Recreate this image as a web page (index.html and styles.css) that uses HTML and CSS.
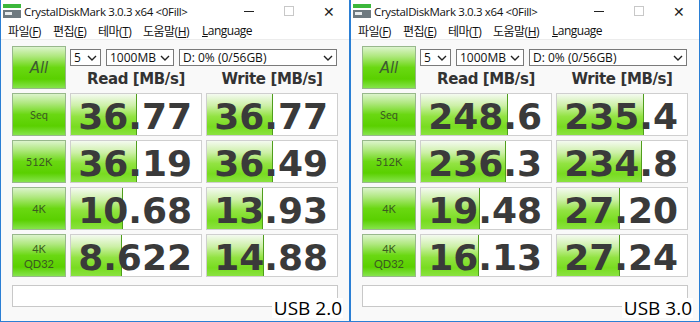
FILE: index.html
```html
<!DOCTYPE html>
<html lang="ko">
<head>
  <meta charset="utf-8">
  <title>CrystalDiskMark USB 2.0 / USB 3.0</title>
  <link rel="stylesheet" href="styles.css">
</head>
<body>
  <div class="win">
    <div class="titlebar">
      <svg class="appicon" width="18" height="14" viewBox="0 0 18 14">
        <rect x="0" y="0" width="18" height="4" fill="#3cb83c"/>
        <rect x="0" y="6" width="18" height="8" fill="#6e7a80"/>
        <rect x="2" y="8" width="7" height="3" fill="#e8ecee"/>
      </svg>
      <span class="title">CrystalDiskMark 3.0.3 x64 &lt;0Fill&gt;</span>
      <div class="controls">
        <span class="ctl"><i class="minbar"></i></span>
        <span class="ctl"><i class="maxbox"></i></span>
        <span class="ctl close">&#x2715;</span>
      </div>
    </div>
    <div class="menubar">
      <span class="mi">파일(<u>F</u>)</span>
      <span class="mi">편집(<u>E</u>)</span>
      <span class="mi">테마(<u>T</u>)</span>
      <span class="mi wide">도움말(<u>H</u>)</span>
      <span class="mi"><u>L</u>anguage</span>
    </div>
    <div class="content">
      <div class="grid">
        <div class="btn allbtn">All</div>
        <div class="topright">
          <div class="selects">
            <div class="sel s-count">5<svg class="chev" width="10" height="6" viewBox="0 0 10 6"><path d="M1 1l4 4 4-4" fill="none" stroke="#222" stroke-width="1.4"/></svg></div>
            <div class="sel s-size">1000MB<svg class="chev" width="10" height="6" viewBox="0 0 10 6"><path d="M1 1l4 4 4-4" fill="none" stroke="#222" stroke-width="1.4"/></svg></div>
            <div class="sel s-drive">D: 0% (0/56GB)<svg class="chev" width="10" height="6" viewBox="0 0 10 6"><path d="M1 1l4 4 4-4" fill="none" stroke="#222" stroke-width="1.4"/></svg></div>
          </div>
          <div class="heads">
            <div class="head">Read [MB/s]</div>
            <div class="head">Write [MB/s]</div>
          </div>
        </div>

        <div class="btn">Seq</div>
        <div class="cell"><div class="bar" style="width:66px"></div><span class="val">36.77</span></div>
        <div class="cell"><div class="bar" style="width:66px"></div><span class="val">36.77</span></div>

        <div class="btn">512K</div>
        <div class="cell"><div class="bar" style="width:66px"></div><span class="val">36.19</span></div>
        <div class="cell"><div class="bar" style="width:66px"></div><span class="val">36.49</span></div>

        <div class="btn">4K</div>
        <div class="cell"><div class="bar" style="width:52px"></div><span class="val">10.68</span></div>
        <div class="cell"><div class="bar" style="width:56px"></div><span class="val">13.93</span></div>

        <div class="btn two">4K<br>QD32</div>
        <div class="cell"><div class="bar" style="width:51px"></div><span class="val">8.622</span></div>
        <div class="cell"><div class="bar" style="width:57px"></div><span class="val">14.88</span></div>

        <div class="comment"></div>
      </div>
      <div class="tag">USB 2.0</div>
    </div>
  </div>

  <div class="win">
    <div class="titlebar">
      <svg class="appicon" width="18" height="14" viewBox="0 0 18 14">
        <rect x="0" y="0" width="18" height="4" fill="#3cb83c"/>
        <rect x="0" y="6" width="18" height="8" fill="#6e7a80"/>
        <rect x="2" y="8" width="7" height="3" fill="#e8ecee"/>
      </svg>
      <span class="title">CrystalDiskMark 3.0.3 x64 &lt;0Fill&gt;</span>
      <div class="controls">
        <span class="ctl"><i class="minbar"></i></span>
        <span class="ctl"><i class="maxbox"></i></span>
        <span class="ctl close">&#x2715;</span>
      </div>
    </div>
    <div class="menubar">
      <span class="mi">파일(<u>F</u>)</span>
      <span class="mi">편집(<u>E</u>)</span>
      <span class="mi">테마(<u>T</u>)</span>
      <span class="mi wide">도움말(<u>H</u>)</span>
      <span class="mi"><u>L</u>anguage</span>
    </div>
    <div class="content">
      <div class="grid">
        <div class="btn allbtn">All</div>
        <div class="topright">
          <div class="selects">
            <div class="sel s-count">5<svg class="chev" width="10" height="6" viewBox="0 0 10 6"><path d="M1 1l4 4 4-4" fill="none" stroke="#222" stroke-width="1.4"/></svg></div>
            <div class="sel s-size">1000MB<svg class="chev" width="10" height="6" viewBox="0 0 10 6"><path d="M1 1l4 4 4-4" fill="none" stroke="#222" stroke-width="1.4"/></svg></div>
            <div class="sel s-drive">D: 0% (0/56GB)<svg class="chev" width="10" height="6" viewBox="0 0 10 6"><path d="M1 1l4 4 4-4" fill="none" stroke="#222" stroke-width="1.4"/></svg></div>
          </div>
          <div class="heads">
            <div class="head">Read [MB/s]</div>
            <div class="head">Write [MB/s]</div>
          </div>
        </div>

        <div class="btn">Seq</div>
        <div class="cell"><div class="bar" style="width:87px"></div><span class="val">248.6</span></div>
        <div class="cell"><div class="bar" style="width:87px"></div><span class="val">235.4</span></div>

        <div class="btn">512K</div>
        <div class="cell"><div class="bar" style="width:85px"></div><span class="val">236.3</span></div>
        <div class="cell"><div class="bar" style="width:85px"></div><span class="val">234.8</span></div>

        <div class="btn">4K</div>
        <div class="cell"><div class="bar" style="width:59px"></div><span class="val">19.48</span></div>
        <div class="cell"><div class="bar" style="width:63px"></div><span class="val">27.20</span></div>

        <div class="btn two">4K<br>QD32</div>
        <div class="cell"><div class="bar" style="width:58px"></div><span class="val">16.13</span></div>
        <div class="cell"><div class="bar" style="width:63px"></div><span class="val">27.24</span></div>

        <div class="comment"></div>
      </div>
      <div class="tag">USB 3.0</div>
    </div>
  </div>
</body>
</html>
```
FILE: styles.css
```css
*{
    margin: 0;
    box-sizing: border-box;
}
body{
    display: flex;
    width: 700px;
    height: 322px;
    overflow: hidden;
    background-color: #ffffff;
    font-family: "Open Sans", "Noto Sans CJK KR", sans-serif;
}
.win{
    width: 350px;
    height: 322px;
    border: 1px solid #2b7fd4;
    border-top: none;
    background-color: #ffffff;
    display: flex;
    flex-direction: column;
}
.titlebar{
    height: 22px;
    display: flex;
    align-items: center;
    padding-left: 2px;
    font-size: 11.5px;
    color: #111;
}
.appicon{
    margin-right: 3px;
}
.title{
    flex: 1;
    white-space: nowrap;
    letter-spacing: -0.35px;
}
.controls{
    display: flex;
    align-items: center;
}
.ctl{
    width: 40px;
    display: flex;
    justify-content: center;
    align-items: center;
    font-size: 13px;
    color: #222;
}
.minbar{
    width: 10px;
    height: 1px;
    background-color: #222;
}
.close{
    font-size: 14px;
}
.maxbox{
    width: 10px;
    height: 10px;
    border: 1px solid #c8c8c8;
}
.menubar{
    height: 18px;
    display: flex;
    align-items: center;
    padding-left: 7px;
    font-size: 12px;
    color: #111;
    border-bottom: 1px solid #ececec;
}
.mi{
    width: 45px;
    white-space: nowrap;
    letter-spacing: -0.5px;
}
.mi.wide{
    width: 59px;
}
.content{
    position: relative;
    flex: 1;
    background-color: #f9f9f9;
    padding: 6px 0 0 11px;
}
.grid{
    display: grid;
    grid-template-columns: 54px 132px 132px;
    grid-template-rows: 43px 43px 43px 43px 43px 26px;
    column-gap: 4px;
    row-gap: 4px;
}
.btn{
    display: flex;
    align-items: center;
    justify-content: center;
    text-align: center;
    border: 1px solid #98b88c;
    background: linear-gradient(#dcf4cc 0%, #b0e880 22%, #6ad812 50%, #5ad000 78%, #86e44c 100%);
    font-family: "Lato", "Open Sans", sans-serif;
    font-size: 11px;
    line-height: 14px;
    color: #3b5a22;
}
.allbtn{
    font-family: "DejaVu Sans", sans-serif;
    font-style: italic;
    font-size: 15px;
    color: #3e5a32;
}
.two{
    line-height: 15px;
}
.topright{
    grid-column: 2 / 4;
    display: flex;
    flex-direction: column;
}
.selects{
    display: flex;
    gap: 5px;
    margin-top: 3px;
}
.sel{
    height: 17px;
    border: 1px solid #7a7a7a;
    background-color: #ffffff;
    font-size: 12px;
    line-height: 15px;
    padding-left: 3px;
    padding-right: 3px;
    display: flex;
    align-items: center;
    justify-content: space-between;
    color: #111;
}
.s-count{ width: 31px; }
.s-size{ width: 68px; }
.s-drive{ width: 158px; }
.heads{
    display: flex;
    gap: 4px;
    margin-top: 4px;
}
.head{
    width: 132px;
    text-align: center;
    font-family: "DejaVu Sans", sans-serif;
    font-weight: 700;
    font-size: 15px;
    letter-spacing: -0.4px;
    line-height: 18px;
    color: #333;
}
.cell{
    position: relative;
    border: 1px solid #cfcfcf;
    background-color: #ffffff;
    overflow: hidden;
}
.bar{
    height: 100%;
    border-right: 1px solid #4f9e1c;
    background: linear-gradient(#f4faf0 0%, #cdf0a8 28%, #92e342 55%, #78dc20 80%, #8ae240 100%);
}
.val{
    position: absolute;
    right: 9px;
    top: 0;
    bottom: 0;
    display: flex;
    align-items: center;
    padding-top: 3px;
    font-family: "DejaVu Sans", sans-serif;
    font-weight: 700;
    font-size: 36px;
    color: #3a3a3a;
}
.comment{
    grid-column: 1 / 4;
    margin-top: 4px;
    border: 1px solid #c8c8c8;
    background-color: #ffffff;
}
.tag{
    position: absolute;
    right: 6px;
    bottom: 3px;
    padding: 0 1px 0 2px;
    background-color: #ffffff;
    font-size: 19px;
    line-height: 20px;
    color: #000;
}
```
